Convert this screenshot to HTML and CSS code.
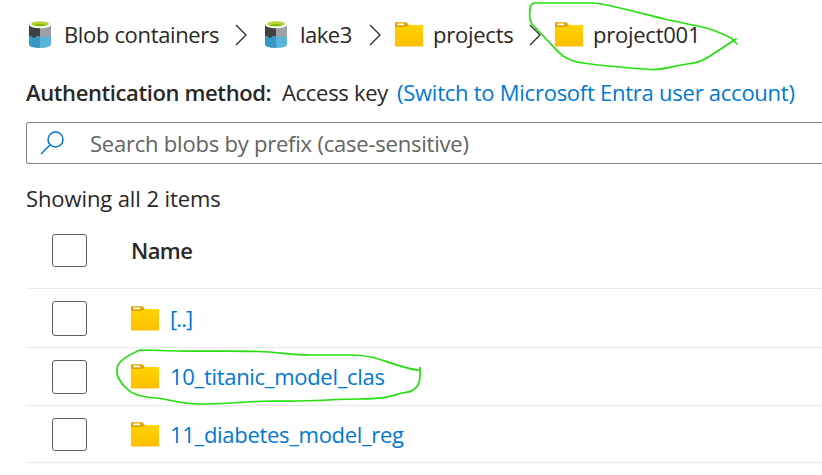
FILE: index.html
```
<!DOCTYPE html>
<html lang="en">
<head>
<meta charset="utf-8">
<title>project001</title>
<link rel="stylesheet" href="styles.css">
</head>
<body>
<svg width="0" height="0" class="defs">
  <defs>
    <linearGradient id="gold" x1="0" y1="0" x2="0" y2="1"><stop offset="0" stop-color="#ffd400"/><stop offset="1" stop-color="#ffbe00"/></linearGradient>
    <symbol id="folder" viewBox="0 0 28 25">
      <path d="M0 1.2Q0 .3.8.3H10.5Q11.6.3 12.3 1.2L14 3V6H0Z" fill="#dfa300"/>
      <path d="M0 5H10.5Q11.6 5 12.4 4.2L13.7 3H28V23.7Q28 24.5 27.2 24.5H.8Q0 24.5 0 23.7Z" fill="url(#gold)"/>
      <rect x="2.2" y="1.5" width="7" height="1.8" rx=".5" fill="#fff"/>
    </symbol>
    <symbol id="lake" viewBox="0 0 22 27">
      <path d="M0 3.5H11V18H0Z" fill="#404040"/>
      <path d="M11 3.5H22V18H11Z" fill="#a0a0a2"/>
      <path d="M0 15.4Q2 14.3 3.5 16T6.4 16.2Q8 13.7 11 15.2V27Q0 27 0 23.6Z" fill="#3999c6"/>
      <path d="M11 15.2Q13.2 17.9 15 16.8Q17 13.8 19 15.3Q20.5 16.2 22 15.4V23.6Q22 27 11 27Z" fill="#59b4d9"/>
      <ellipse cx="11" cy="3.6" rx="11" ry="3.6" fill="#fff"/>
      <ellipse cx="11" cy="2.9" rx="8.9" ry="2.7" fill="#b8d432"/>
      <ellipse cx="11" cy="4.1" rx="6" ry="1" fill="#7fba00"/>
    </symbol>
    <symbol id="chevron" viewBox="0 0 12 22"><path d="M1 1L11 11L1 21" fill="none" stroke="#292827" stroke-width="1.3"/></symbol>
  </defs>
</svg>
<main class="page">
  <nav class="crumbs">
    <span class="crumb containers"><svg class="lake"><use href="#lake"/></svg><span class="label">Blob containers</span></span>
    <svg class="chevron"><use href="#chevron"/></svg>
    <span class="crumb account"><svg class="lake"><use href="#lake"/></svg><span class="label">lake3</span></span>
    <svg class="chevron"><use href="#chevron"/></svg>
    <span class="crumb projects"><svg class="folder"><use href="#folder"/></svg><span class="label">projects</span></span>
    <svg class="chevron"><use href="#chevron"/></svg>
    <span class="crumb current"><svg class="folder"><use href="#folder"/></svg><span class="label">project001</span></span>
  </nav>
  <div class="auth"><span class="auth-label">Authentication method:</span><span class="auth-value">Access key</span><a class="auth-link">(Switch to Microsoft Entra user account)</a></div>
  <div class="search">
    <svg class="lens" viewBox="0 0 24 24"><circle cx="15.5" cy="8.5" r="7.5"/><path d="M10.2 13.8L1 23"/></svg>
    <span class="placeholder">Search blobs by prefix (case-sensitive)</span>
  </div>
  <div class="count">Showing all 2 items</div>
  <div class="table">
    <div class="row head"><span class="check"></span><span class="name">Name</span></div>
    <div class="row up"><span class="check"></span><svg class="folder"><use href="#folder"/></svg><a class="link">[..]</a></div>
    <div class="row titanic"><span class="check"></span><svg class="folder"><use href="#folder"/></svg><a class="link">10_titanic_model_clas</a></div>
    <div class="row diabetes"><span class="check"></span><svg class="folder"><use href="#folder"/></svg><a class="link">11_diabetes_model_reg</a></div>
  </div>
</main>
<svg class="ink" viewBox="0 0 822 475">
  <path d="M737 44L731 38C721 33 713 29 702 27C688 24 677 22 664 19C648 15 634 11 620 8C610 6 602 3 592 3H535C531 3 530 6 530 10C529 16 530 21 532 24L546 39C553 46 558 52 563 56C569 60 575 62 583 63C605 66 628 68 651 69.5C664 70 673 66 687 64C695 63 701 62 710 56C721 49 728 44 736 39"/>
  <path d="M420 367.5V370.5C407 369 394 364 380 359.500C370 356 363 355 350 355H310C290 355 280 352 258 351.5C223 350.500 190 352 160 350.500C150 350 145 350 140 350C133 353 121 359 118 365C115 373 119 381 125 387C131 394 139 396 150 397.500C167 398 178 404 199 404C227 404 248 401 275 401C311 402 333 399 359 399C386 399 391 396 402 393C410 392 414 391 418 385C421 379 420 373 420 367.500"/>
</svg>
</body>
</html>
```
FILE: styles.css
```
* { box-sizing: border-box; }
body {
  margin: 0;
  width: 822px;
  height: 475px;
  overflow: hidden;
  background: #fff;
  color: #292827;
  font-family: "Open Sans", "Noto Sans", sans-serif;
  font-size: 22px;
  line-height: 30px;
  white-space: nowrap;
}
svg { flex: none; display: block; }
.defs { position: absolute; }
.page { padding-left: 26px; }
.crumbs { display: flex; align-items: center; height: 69px; }
.crumb { display: flex; align-items: center; }
.crumb .label { margin-bottom: 1px; }
.crumb .lake { margin: 0 13px 0 3px; }
.crumb .folder { margin-right: 10px; }
.lake { width: 22px; height: 27px; }
.folder { width: 28px; height: 25px; }
.chevron { width: 12px; height: 22px; }
.containers { width: 209px; letter-spacing: -0.35px; }
.account { width: 107px; margin-left: 15px; letter-spacing: -0.5px; }
.projects { width: 134px; margin-left: 14px; letter-spacing: -0.25px; }
.current { margin-left: 14px; letter-spacing: -0.25px; }
.auth { display: flex; height: 53px; padding-top: 8px; }
.auth-label { width: 256px; font-weight: 600; letter-spacing: -0.39px; }
.auth-value { width: 115px; letter-spacing: -0.3px; }
.auth-link { color: #0078d4; letter-spacing: -0.25px; }
.search {
  display: flex;
  align-items: center;
  height: 42px;
  padding-left: 13px;
  border: 1px solid #868686;
  border-right: 0;
  border-radius: 3px 0 0 3px;
}
.lens { width: 24px; height: 24px; fill: none; stroke: #0078d4; stroke-width: 1.5; }
.placeholder { margin-left: 26px; color: #646362; letter-spacing: -0.22px; }
.count { height: 58px; padding-top: 19px; letter-spacing: -0.1px; }
.row { display: flex; align-items: center; padding-left: 26px; border-bottom: 1px solid #eaeaea; }
.head { height: 67px; padding-bottom: 9px; }
.up { height: 59px; }
.titanic { height: 58px; }
.diabetes { height: 57px; }
.check { width: 35px; height: 34px; margin-right: 44px; border: 1px solid #605e5c; border-radius: 3px; }
.head .check, .diabetes .check { height: 33px; }
.up .check { height: 35px; }
.name { margin-bottom: 2px; font-weight: 600; letter-spacing: -0.6px; }
.link { margin-left: 11px; color: #0078d4; letter-spacing: -0.3px; }
.up .link { letter-spacing: -0.9px; }
.titanic .link { margin-bottom: 2px; }
.ink { position: absolute; left: 0; top: 0; width: 822px; height: 475px; fill: none; stroke: #24e00c; stroke-width: 1.7; stroke-linejoin: round; stroke-linecap: round; pointer-events: none; }
```
